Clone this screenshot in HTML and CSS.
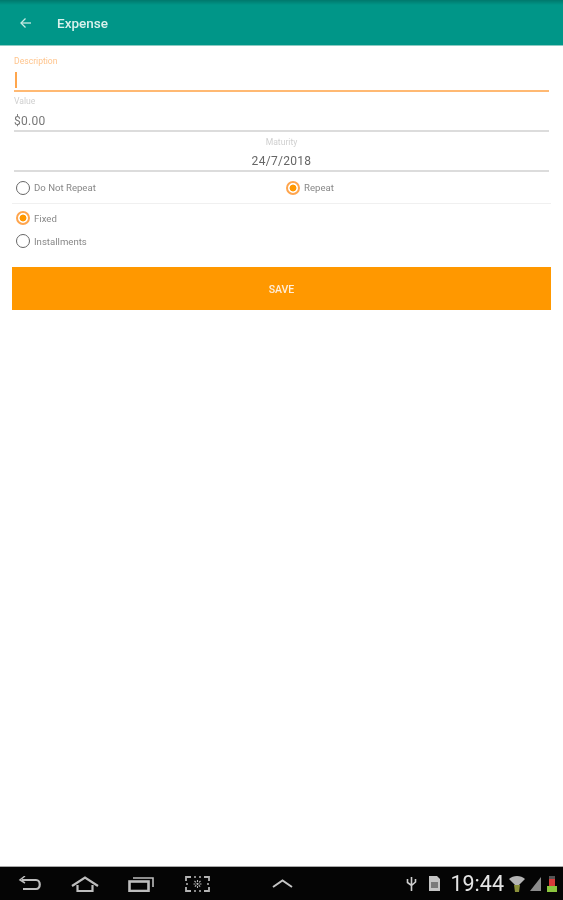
FILE: index.html
```html
<!DOCTYPE html>
<html lang="en">
<head>
  <meta charset="UTF-8">
  <meta name="viewport" content="width=device-width, initial-scale=1.0">
  <title>Expense</title>
  <link rel="stylesheet" href="styles.css">
</head>
<body>
  <header class="toolbar">
    <svg class="back-icon" width="13" height="12" viewBox="0 0 13 12" fill="none" stroke="#c8ebe4" stroke-width="1.300">
      <path d="M12 6H2"/>
      <path d="M6.500 1.500L2 6l4.500 4.500"/>
    </svg>
    <h1 class="toolbar-title">Expense</h1>
  </header>

  <main class="content">
    <form class="form">
      <div class="field field-active">
        <label class="field-label">Description</label>
        <div class="field-value"><span class="caret"></span></div>
      </div>
      <div class="field">
        <label class="field-label">Value</label>
        <div class="field-value">$0.00</div>
      </div>
      <div class="field field-center">
        <label class="field-label">Maturity</label>
        <div class="field-value">24/7/2018</div>
      </div>

      <div class="radio-row">
        <div class="radio"><span class="radio-circle"></span>Do Not Repeat</div>
        <div class="radio"><span class="radio-circle checked"></span>Repeat</div>
      </div>

      <div class="radio-stack">
        <div class="radio"><span class="radio-circle checked"></span>Fixed</div>
        <div class="radio"><span class="radio-circle"></span>Installments</div>
      </div>

      <button type="button" class="save-btn">SAVE</button>
    </form>
  </main>

  <footer class="system-bar">
    <div class="nav-icons">
      <svg class="nav-back" width="24" height="16" viewBox="0 0 24 16" fill="none" stroke="#bdbdbd" stroke-width="2.200">
        <path d="M4 4h14c5 0 5 9 0 9H5"/>
        <path d="M7 0L2 4l5 3" stroke-width="1.500"/>
      </svg>
      <svg class="nav-home" width="28" height="16" viewBox="0 0 28 16" fill="none" stroke="#bdbdbd" stroke-width="2.200">
        <path d="M1 10L14 1.500 27 10"/>
        <path d="M6.500 9v6h15V9"/>
      </svg>
      <svg class="nav-recent" width="27" height="16" viewBox="0 0 27 16" fill="none" stroke="#bdbdbd">
        <rect x="1.500" y="5.500" width="19" height="9.500" stroke-width="2.600"/>
        <path d="M5 2h20v9" stroke-width="1.600"/>
      </svg>
      <svg class="nav-shot" width="25" height="16" viewBox="0 0 25 16" fill="none" stroke="#b4b4b4" stroke-width="1.800">
        <path d="M1 5V1h5M19 1h5v4M1 11v4h5M19 15h5v-4"/>
        <path d="M9 1h2M14 1h2M9 15h2M14 15h2M1 8h2M22 8h2" stroke-width="1.400"/>
        <path d="M12.500 4v8M8.500 8h8M9.500 5l6 6M15.500 5l-6 6" stroke-width="1.100" stroke-dasharray="2 1"/>
      </svg>
      <svg class="nav-up" width="21" height="9" viewBox="0 0 21 9" fill="none" stroke="#c4c4c4" stroke-width="2">
        <path d="M1 8l9.500-6.500L20 8"/>
      </svg>
    </div>
    <div class="status-icons">
      <svg class="usb-icon" width="11" height="16" viewBox="0 0 11 16" fill="none" stroke="#cfcfcf" stroke-width="1.600">
        <path d="M5.500 1v14M1.500 3v3.500l4 3 4-3.500V3"/>
      </svg>
      <svg class="sd-icon" width="13" height="15" viewBox="0 0 13 15">
        <path d="M1 0h8l3 3v12H1z" fill="#c4c4c4"/>
        <rect x="3" y="6" width="7" height="6" fill="#7a7a7a"/>
      </svg>
      <span class="clock">19:44</span>
      <svg width="16" height="17" viewBox="0 0 16 17">
        <path d="M0 4c4-4 12-4 16 0l-8 8z" fill="#b4b4b4"/>
        <path d="M5 10h6l-1 7H6z" fill="#8a8f3a"/>
      </svg>
      <svg width="11" height="14" viewBox="0 0 11 14">
        <path d="M11 0v14H0z" fill="#8c8c8c"/>
      </svg>
      <svg width="12" height="17" viewBox="0 0 12 17">
        <rect x="3" y="1" width="6" height="3" fill="#555"/>
        <rect x="3" y="4" width="6" height="7" fill="#d83a3a"/>
        <rect x="1" y="11" width="10" height="6" fill="#8bc53f"/>
      </svg>
    </div>
  </footer>
</body>
</html>
```

FILE: styles.css
```css
* {
  box-sizing: border-box;
}
body {
  margin: 0;
  height: 900px;
  display: flex;
  flex-direction: column;
  background: white;
  font-family: Roboto, "Liberation Sans", sans-serif;
  overflow: hidden;
}

/* the reference is a soft, upscaled capture */
.toolbar,
.form,
.system-bar {
  filter: blur(0.4px);
}

.toolbar {
  height: 46px;
  flex-shrink: 0;
  display: flex;
  align-items: center;
  padding: 1px 0 0 19px;
  background: linear-gradient(#00786c 0, #009688 5px);
  border-bottom: 1px solid #8ccbc3;
}
.back-icon {
  margin-right: 25px;
}
.toolbar-title {
  margin: 0;
  font-size: 13.500px;
  font-weight: 500;
  color: #d9f1ec;
}

.content {
  flex: 1;
}
.form {
  padding: 6px 12px 0;
}

.field {
  margin: 0 2px;
  height: 40px;
  padding-top: 4px;
  display: flex;
  flex-direction: column;
  border-bottom: 2px solid #dcdcdc;
}
.field-label {
  font-size: 8.600px;
  line-height: 10px;
  color: #cfcfcf;
}
.field-value {
  margin-top: 5px;
  font-size: 12px;
  line-height: 20px;
  height: 20px;
  color: #777;
  letter-spacing: 0.300px;
}
.field-active {
  border-bottom-color: #ffb973;
}
.field-active .field-label {
  color: #ffc48c;
}
.field-center {
  align-items: center;
  padding-top: 5px;
}
.field-center .field-value {
  margin-top: 4px;
  color: #666;
}
.caret {
  display: block;
  width: 2px;
  height: 16px;
  margin: 1px 0 0 1px;
  background: #ffa64d;
}

.radio-row {
  display: grid;
  grid-template-columns: 270px 1fr;
  height: 32px;
  align-items: center;
  padding-left: 4px;
  border-bottom: 1px solid #f0f0f0;
}
.radio-stack {
  display: flex;
  flex-direction: column;
  gap: 9px;
  padding: 7px 0 0 4px;
}
.radio {
  display: flex;
  align-items: center;
  height: 14px;
  font-size: 9.600px;
  color: #888;
}
.radio-circle {
  width: 14px;
  height: 14px;
  margin-right: 4px;
  border-radius: 50%;
  border: 1.500px solid #666;
  flex-shrink: 0;
}
.radio-circle.checked {
  border: 2px solid #ffa54d;
  background: radial-gradient(circle, #ff9800 0, #ff9800 3px, white 3.800px);
}

.save-btn {
  display: block;
  width: 100%;
  height: 43px;
  margin-top: 19px;
  padding-top: 3px;
  border: none;
  background: #ff9800;
  color: #ffeeda;
  font-family: inherit;
  font-size: 10.500px;
  font-weight: 500;
}

.system-bar {
  height: 34px;
  flex-shrink: 0;
  display: flex;
  justify-content: space-between;
  align-items: center;
  background: #050505;
  border-top: 1px solid #a8a8a8;
}
.nav-icons {
  display: flex;
  align-items: center;
  padding-left: 18px;
}
.nav-back {
  margin-right: 29px;
}
.nav-home {
  margin-right: 29px;
}
.nav-recent {
  margin-right: 30px;
}
.nav-shot {
  margin-right: 62px;
}
.status-icons {
  display: flex;
  align-items: center;
  gap: 5px;
  padding-right: 5px;
}
.usb-icon {
  margin-right: 6px;
}
.sd-icon {
  margin-right: 4px;
}
.clock {
  font-size: 21.500px;
  font-weight: 400;
  color: #e4e4e4;
}
```
